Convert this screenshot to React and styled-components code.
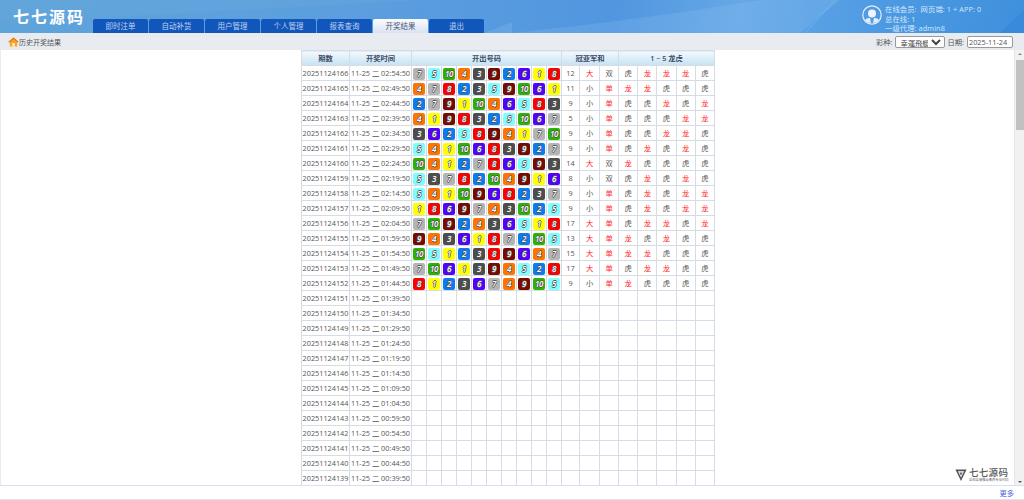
import React from "react";
import styled, { createGlobalStyle } from "styled-components";

const FONT = `"Open Sans", "Noto Sans CJK SC", sans-serif`;

const GlobalStyle = createGlobalStyle`
  html, body {
    margin: 0;
    height: 100%;
    overflow: hidden;
    background: #fff;
  }
  body {
    font-family: ${FONT};
    font-size: 7.3px;
    color: #555;
  }
`;

const Page = styled.div`
  width: 1024px;
  height: 500px;
  display: flex;
  flex-direction: column;
  position: relative;
  overflow: hidden;
`;

const Header = styled.header`
  height: 33px;
  flex: none;
  display: flex;
  align-items: flex-end;
  position: relative;
  overflow: hidden;
  background: linear-gradient(100deg, #5ea4da 0%, #5c9ede 35%, #5196e0 60%, #66a8e6 72%, #4a98e2 88%, #3f90dc 100%);
`;

const HeaderArt = styled.svg`
  position: absolute;
  inset: 0;
  width: 100%;
  height: 100%;
`;

const Logo = styled.div`
  position: relative;
  width: 93px;
  align-self: flex-start;
  padding: 7px 0 0 13px;
  box-sizing: border-box;
  font-size: 16px;
  line-height: 20px;
  font-weight: 700;
  letter-spacing: 2px;
  color: #fff;
  white-space: nowrap;
`;

const Tabs = styled.nav`
  position: relative;
  display: flex;
  gap: 1px;
`;

const Tab = styled.a`
  width: 55px;
  height: 14px;
  line-height: 15px;
  text-align: center;
  font-size: 7.5px;
  border-radius: 2px 2px 0 0;
  background: ${(p) => (p.$active ? "linear-gradient(#fbfcff, #d9e2f3)" : "#1156bb")};
  color: ${(p) => (p.$active ? "#4a5670" : "#bcd2ee")};
`;

const UserBox = styled.div`
  position: absolute;
  left: 862px;
  top: 5px;
  display: flex;
  gap: 3px;
  color: #d6e7f8;
  font-size: 7.3px;
  line-height: 9.5px;
`;

const UserText = styled.div`
  white-space: nowrap;
  letter-spacing: 0.1px;
`;

const SubBar = styled.div`
  height: 17px;
  flex: none;
  display: flex;
  align-items: center;
  justify-content: space-between;
  padding: 0 11px 0 8px;
  background: #e8ecf0;
  color: #555;
`;

const Crumb = styled.div`
  display: flex;
  align-items: center;
  font-size: 7px;
`;

const Filters = styled.div`
  display: flex;
  align-items: center;
  gap: 2px;
  font-size: 7.3px;
`;

const Select = styled.select`
  width: 50px;
  height: 12px;
  margin: 0 0 0 1px;
  padding: 0;
  font: 7.3px ${FONT};
  color: #444;
  background: #fff;
  border: 1px solid #999;
  border-radius: 2px;
`;

const DateInput = styled.input`
  width: 46px;
  height: 12px;
  margin: 0 0 0 1px;
  padding: 0 0 0 1px;
  box-sizing: border-box;
  font: 7.3px ${FONT};
  color: #555;
  background: #fff;
  border: 1px solid #999;
  border-radius: 2px;
`;

const Body = styled.div`
  flex: 1;
  min-height: 0;
  display: flex;
`;

const Main = styled.main`
  flex: 1;
  min-width: 0;
  overflow: hidden;
  padding-left: 301px;
  border-left: 1px solid #e8ecf0;
  box-sizing: border-box;
`;

const Table = styled.table`
  width: 414px;
  margin-left: -1px;
  border-collapse: collapse;
  table-layout: fixed;
  background: #fff;
  td, th {
    border: 1px solid #d6dce4;
    padding: 0;
    height: 14px;
    line-height: 14px;
    text-align: center;
    white-space: nowrap;
    overflow: hidden;
  }
`;

const HeadCell = styled.th`
  font-size: 7.3px;
  font-weight: 600;
  color: #3c4a66;
  background: linear-gradient(#f3f9fd, #c6e2f4);
`;

const Cell = styled.td`
  font-size: 7.3px;
  color: ${(p) => (p.$hot ? "#ff2a2a" : "#555")};
`;

const NumberCell = styled(Cell)`
  font-size: 8px;
`;

const Ball = styled.span`
  display: inline-block;
  width: 11.5px;
  height: 11.5px;
  line-height: 11.5px;
  vertical-align: middle;
  border-radius: 2px;
  text-align: center;
  font-size: 8px;
  font-weight: 600;
  font-style: italic;
  letter-spacing: -0.5px;
  color: #fff;
  background: ${(p) => p.$color};
  text-shadow: -0.7px 0 0 #555, 0.7px 0 0 #555, 0 -0.7px 0 #555, 0 0.7px 0 #555;
`;

const ScrollBar = styled.div`
  width: 9px;
  flex: none;
  display: flex;
  flex-direction: column;
  align-items: center;
  background: #f1f1f1;
  border-left: 1px solid #e6e6e6;
`;

const ScrollThumb = styled.div`
  width: 8px;
  height: 70px;
  margin-top: 5px;
  background: #c1c1c1;
`;

const ScrollArrow = styled.div`
  width: 0;
  height: 0;
  margin: ${(p) => (p.$down ? "auto 0 2px" : "3px 0 0")};
  border-left: 2px solid transparent;
  border-right: 2px solid transparent;
  ${(p) => (p.$down ? "border-top: 2px solid #555;" : "border-bottom: 2px solid #888;")}
`;

const Footer = styled.footer`
  height: 13px;
  flex: none;
  display: flex;
  align-items: center;
  justify-content: flex-end;
  padding-right: 10px;
  border-top: 1px solid #d8dff0;
  border-bottom: 1px solid #e4e4e4;
  font-size: 7.3px;
  color: #4a62e0;
  background: #fff;
`;

const Watermark = styled.div`
  position: absolute;
  left: 955px;
  top: 467px;
  display: flex;
  align-items: center;
  gap: 2px;
`;

const MarkText = styled.div`
  display: flex;
  flex-direction: column;
  color: #555;
`;

const MarkTitle = styled.div`
  font-size: 9.5px;
  line-height: 11px;
  font-weight: 500;
  letter-spacing: 0.3px;
`;

const MarkSub = styled.div`
  font-size: 3.3px;
  line-height: 4px;
  white-space: nowrap;
  color: #666;
`;

const NAV = ["即时注单", "自动补货", "用户管理", "个人管理", "报表查询", "开奖结果", "退出"];

const BALL_COLORS = {
  1: "#ffff00",
  2: "#0a7cf0",
  3: "#4d4d4d",
  4: "#ff7300",
  5: "#7ffcff",
  6: "#5200ff",
  7: "#b4b4b4",
  8: "#ff0000",
  9: "#780b00",
  10: "#2bb300",
};

const DRAWS = [
  [7, 5, 10, 4, 3, 9, 2, 6, 1, 8],
  [4, 7, 8, 2, 3, 5, 9, 10, 6, 1],
  [2, 7, 9, 1, 10, 4, 6, 5, 8, 3],
  [4, 1, 9, 8, 3, 2, 5, 10, 6, 7],
  [3, 6, 2, 5, 8, 9, 4, 1, 7, 10],
  [5, 4, 1, 10, 6, 8, 3, 9, 2, 7],
  [10, 4, 1, 2, 7, 8, 6, 5, 9, 3],
  [5, 3, 7, 8, 2, 10, 4, 9, 1, 6],
  [5, 4, 1, 10, 9, 6, 8, 2, 3, 7],
  [1, 8, 6, 9, 7, 4, 3, 10, 2, 5],
  [7, 10, 9, 2, 4, 3, 6, 5, 1, 8],
  [9, 4, 3, 6, 1, 8, 7, 2, 10, 5],
  [10, 5, 1, 2, 3, 8, 9, 6, 4, 7],
  [7, 10, 6, 1, 3, 9, 4, 5, 2, 8],
  [8, 1, 2, 3, 6, 7, 4, 9, 10, 5],
];

const pad = (n) => String(n).padStart(2, "0");

const drawTime = (i) => {
  const total = 2 * 60 + 54 - i * 5;
  return `11-25 二 ${pad(Math.floor(total / 60))}:${pad(total % 60)}:50`;
};

const Tiger = ({ draw }) =>
  [0, 1, 2, 3, 4].map((i) => {
    const dragon = draw[i] > draw[9 - i];
    return (
      <Cell key={i} $hot={dragon}>
        {dragon ? "龙" : "虎"}
      </Cell>
    );
  });

const Row = ({ index }) => {
  const draw = DRAWS[index];
  const sum = draw ? draw[0] + draw[1] : 0;
  return (
    <tr>
      <Cell>{20251124166 - index}</Cell>
      <Cell>{drawTime(index)}</Cell>
      {draw ? (
        <>
          {draw.map((n, i) => (
            <NumberCell key={i}>
              <Ball $color={BALL_COLORS[n]}>{n}</Ball>
            </NumberCell>
          ))}
          <Cell>{sum}</Cell>
          <Cell $hot={sum > 11}>{sum > 11 ? "大" : "小"}</Cell>
          <Cell $hot={sum % 2 === 1}>{sum % 2 === 1 ? "单" : "双"}</Cell>
          <Tiger draw={draw} />
        </>
      ) : (
        Array.from({ length: 18 }, (_, i) => <Cell key={i} />)
      )}
    </tr>
  );
};

const HomeIcon = () => (
  <svg width="11" height="10" viewBox="0 0 11 10">
    <path d="M5.5 0.5 L10.8 5 L9.2 5 L9.2 9.5 L1.8 9.5 L1.8 5 L0.2 5 Z" fill="#f5a623" />
    <path d="M5.5 0.5 L10.8 5 L9.6 5.4 L5.5 2 L1.4 5.4 L0.2 5 Z" fill="#e8742a" />
    <rect x="4.3" y="6" width="2.4" height="3.5" fill="#fff3c8" />
  </svg>
);

const UserIcon = () => (
  <svg width="20" height="20" viewBox="0 0 20 20">
    <circle cx="10" cy="10" r="9.2" fill="none" stroke="#e3eefa" strokeWidth="1.2" />
    <circle cx="10" cy="8.5" r="4" fill="#eef5fc" />
    <path d="M3 15 Q5 12.5 8 13 L9 18 Q5 18 3 15 Z M17 15 Q15 12.5 12 13 L11 18 Q15 18 17 15 Z" fill="#e3eefa" />
  </svg>
);

const MarkIcon = () => (
  <svg width="12" height="14" viewBox="0 0 14 15">
    <path d="M0.5 1 H13.5 L7 14.5 Z" fill="#555" />
    <path d="M3.4 3 H10.6 L7 10.5 Z" fill="#fff" />
    <path d="M5 4.5 H9 L7 8.5 Z" fill="#666" />
  </svg>
);

export default function App() {
  return (
    <Page>
      <GlobalStyle />
      <Header>
        <HeaderArt viewBox="0 0 1024 33" preserveAspectRatio="none">
          <path d="M0 0 H420 Q220 12 0 22 Z" fill="#6aa8dc" opacity="0.35" />
          <path d="M512 33 Q640 20 760 0 H840 L800 33 Z" fill="#8cc0ee" opacity="0.25" />
          <path d="M805 33 L835 0" stroke="#8fc2ee" strokeWidth="0.6" opacity="0.7" />
          <path d="M1000 33 L1024 10 V33 Z" fill="#2f86d8" opacity="0.5" />
          <path d="M484 33 L512 22 L512 33 Z" fill="#7ab4e6" opacity="0.4" />
        </HeaderArt>
        <Logo>七七源码</Logo>
        <Tabs>
          {NAV.map((label) => (
            <Tab key={label} $active={label === "开奖结果"}>
              {label}
            </Tab>
          ))}
        </Tabs>
        <UserBox>
          <UserIcon />
          <UserText>
            在线会员:&nbsp; 网页端: 1 + APP: 0
            <br />
            总在线: 1
            <br />
            一级代理: admin8
          </UserText>
        </UserBox>
      </Header>
      <SubBar>
        <Crumb>
          <HomeIcon />
          历史开奖结果
        </Crumb>
        <Filters>
          彩种:
          <Select defaultValue="幸運飛艇">
            <option>幸運飛艇</option>
          </Select>
          日期:
          <DateInput defaultValue="2025-11-24" />
        </Filters>
      </SubBar>
      <Body>
        <Main>
          <Table>
            <colgroup>
              <col width="48" />
              <col width="62" />
              {Array.from({ length: 10 }, (_, i) => (
                <col key={i} width="15" />
              ))}
              <col width="18" />
              <col width="20" />
              <col width="19" />
              {Array.from({ length: 5 }, (_, i) => (
                <col key={i} width="19.2" />
              ))}
            </colgroup>
            <thead>
              <tr>
                <HeadCell>期数</HeadCell>
                <HeadCell>开奖时间</HeadCell>
                <HeadCell colSpan={10}>开出号码</HeadCell>
                <HeadCell colSpan={3}>冠亚军和</HeadCell>
                <HeadCell colSpan={5}>1 ~ 5 龙虎</HeadCell>
              </tr>
            </thead>
            <tbody>
              {Array.from({ length: 28 }, (_, i) => (
                <Row key={i} index={i} />
              ))}
            </tbody>
          </Table>
        </Main>
        <ScrollBar>
          <ScrollArrow />
          <ScrollThumb />
          <ScrollArrow $down />
        </ScrollBar>
      </Body>
      <Footer>更多</Footer>
      <Watermark>
        <MarkIcon />
        <MarkText>
          <MarkTitle>七七源码</MarkTitle>
          <MarkSub>全知全能推动素养专业代码</MarkSub>
        </MarkText>
      </Watermark>
    </Page>
  );
}
